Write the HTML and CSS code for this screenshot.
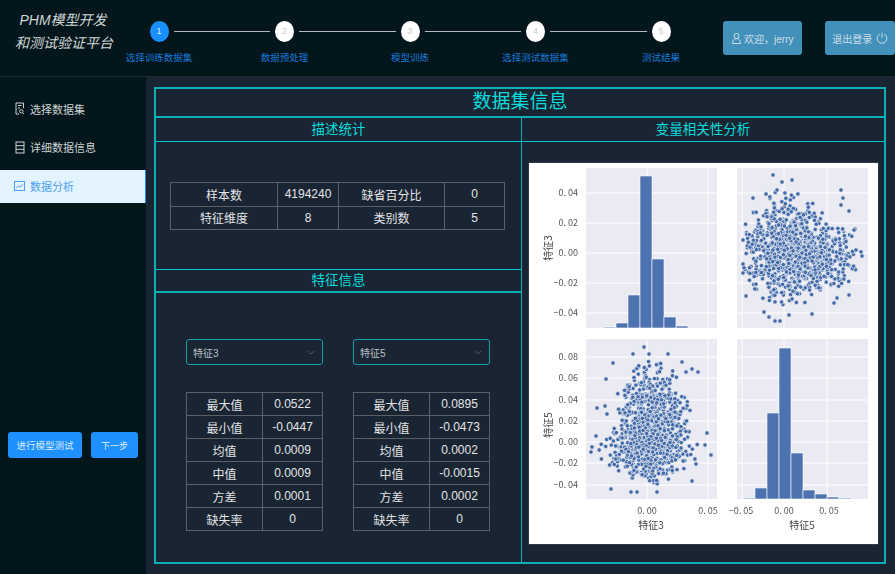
FILE: index.html

```html
<!DOCTYPE html>
<html>
<head>
	<meta charset="utf-8">
	<title>PHM模型开发和测试验证平台</title>
	<link rel="stylesheet" href="styles.css">
</head>
<body>
	<header class="topbar">
		<div class="brand">PHM模型开发<br>和测试验证平台</div>
		<div class="steps">
			<div class="step">
				<div class="step-head"><span class="step-line off"></span><span class="step-dot active">1</span><span class="step-line"></span></div>
				<div class="step-name">选择训练数据集</div>
			</div>
			<div class="step">
				<div class="step-head"><span class="step-line"></span><span class="step-dot">2</span><span class="step-line"></span></div>
				<div class="step-name">数据预处理</div>
			</div>
			<div class="step">
				<div class="step-head"><span class="step-line"></span><span class="step-dot">3</span><span class="step-line"></span></div>
				<div class="step-name">模型训练</div>
			</div>
			<div class="step">
				<div class="step-head"><span class="step-line"></span><span class="step-dot">4</span><span class="step-line"></span></div>
				<div class="step-name">选择测试数据集</div>
			</div>
			<div class="step">
				<div class="step-head"><span class="step-line"></span><span class="step-dot">5</span><span class="step-line off"></span></div>
				<div class="step-name">测试结果</div>
			</div>
		</div>
		<button class="top-btn welcome">
			<svg class="icon user" viewBox="0 0 9 11"><circle cx="4.500" cy="3" r="2.500"/><path d="M.5 10.500c0-3 1.500-5 4-5s4 2 4 5z"/></svg>
			欢迎，jerry
		</button>
		<button class="top-btn logout">
			退出登录
			<svg class="icon power" viewBox="0 0 12 12"><path d="M3.800 2.200a4.800 4.800 0 1 0 4.400 0"/><path d="M6 .8v5"/></svg>
		</button>
	</header>

	<div class="layout">
		<aside class="sidebar">
			<div class="menu-item">
				<svg class="icon" viewBox="0 0 10 13"><path d="M8.500 6V1H1v11h3"/><path d="M3 3.500h3.500M3 6h2"/><circle cx="6.300" cy="9.300" r="1.700"/><path d="M7.500 10.500l1.500 1.500"/></svg>
				选择数据集
			</div>
			<div class="menu-item">
				<svg class="icon" viewBox="0 0 10 13"><rect x="1" y="1" width="8" height="11"/><path d="M1 4.700h8M1 8.300h8"/></svg>
				详细数据信息
			</div>
			<div class="menu-item current">
				<svg class="icon chart-icon" viewBox="0 0 11 10"><rect x=".5" y=".5" width="10" height="9"/><path d="M2.200 7l2.300-2 1.500 1.200 3-3"/></svg>
				数据分析
			</div>
			<div class="side-actions">
				<button class="side-btn test">进行模型测试</button>
				<button class="side-btn next">下一步</button>
			</div>
		</aside>

		<main class="content">
			<div class="panel">
				<h1 class="panel-title">数据集信息</h1>
				<div class="panel-body">
					<div class="left-col">
						<h2 class="section-title">描述统计</h2>
						<div class="summary">
							<table class="info wide">
								<tr><td class="c1">样本数</td><td class="c2">4194240</td><td class="c3">缺省百分比</td><td>0</td></tr>
								<tr><td class="c1">特征维度</td><td class="c2">8</td><td class="c3">类别数</td><td>5</td></tr>
							</table>
						</div>
						<h2 class="section-title second">特征信息</h2>
						<div class="features">
							<div class="feature">
								<div class="select"><span>特征3</span><svg class="chevron" viewBox="0 0 10 6"><path d="M1 1l4 4 4-4"/></svg></div>
								<table class="info">
									<tr><td class="name">最大值</td><td>0.0522</td></tr>
									<tr><td class="name">最小值</td><td>-0.0447</td></tr>
									<tr><td class="name">均值</td><td>0.0009</td></tr>
									<tr><td class="name">中值</td><td>0.0009</td></tr>
									<tr><td class="name">方差</td><td>0.0001</td></tr>
									<tr><td class="name">缺失率</td><td>0</td></tr>
								</table>
							</div>
							<div class="feature">
								<div class="select"><span>特征5</span><svg class="chevron" viewBox="0 0 10 6"><path d="M1 1l4 4 4-4"/></svg></div>
								<table class="info">
									<tr><td class="name">最大值</td><td>0.0895</td></tr>
									<tr><td class="name">最小值</td><td>-0.0473</td></tr>
									<tr><td class="name">均值</td><td>0.0002</td></tr>
									<tr><td class="name">中值</td><td>-0.0015</td></tr>
									<tr><td class="name">方差</td><td>0.0002</td></tr>
									<tr><td class="name">缺失率</td><td>0</td></tr>
								</table>
							</div>
						</div>
					</div>
					<div class="right-col">
						<h2 class="section-title">变量相关性分析</h2>
						<div class="chart-wrap">
							<svg id="pairplot" class="pairplot" viewBox="529 163 349 381"></svg>
						</div>
					</div>
				</div>
			</div>
		</main>
	</div>
	<script src="chart.js"></script>
</body>
</html>
```

FILE: styles.css

```css
* {
  box-sizing: border-box;
}
html, body {
  margin: 0;
  height: 574px;
  overflow: hidden;
}
body {
  background-color: #1a2533;
  font-family: "Liberation Sans", "Noto Sans CJK SC", sans-serif;
}
h1, h2 {
  margin: 0;
  font-weight: normal;
  text-align: center;
  color: #0adcdc;
}
button {
  font-family: inherit;
  border: none;
  padding: 0;
  cursor: pointer;
}
.icon {
  fill: none;
  stroke: currentColor;
  stroke-width: 1;
  width: 10px;
  height: 13px;
  flex: none;
}
.icon.user {
  width: 9px;
  height: 11px;
}
.icon.power {
  width: 12px;
  height: 12px;
}
.icon.chart-icon {
  width: 11px;
  height: 10px;
  margin-left: -1px;
}

/* top bar */
.topbar {
  display: flex;
  align-items: flex-start;
  height: 77px;
  background-color: #02161c;
  border-bottom: 1px solid #1e2b37;
}
.brand {
  width: 96px;
  margin: 9px -14.750px 0 15px;
  font-size: 14px;
  line-height: 23px;
  font-style: italic;
  text-align: center;
  color: #d2d6d6;
  white-space: nowrap;
  flex: none;
}
.steps {
  display: flex;
  width: 627.500px;
  margin-top: 21px;
  flex: none;
}
.step {
  width: 125.500px;
}
.step-head {
  display: flex;
  align-items: center;
  gap: 5px;
}
.step-line {
  flex: 1;
  height: 1px;
  background-color: #b4b8b8;
}
.step-line.off {
  visibility: hidden;
}
.step-dot {
  width: 19px;
  height: 21px;
  border-radius: 50%;
  background-color: #fff;
  color: #c9c9c9;
  font-size: 9px;
  line-height: 21px;
  text-align: center;
  flex: none;
}
.step-dot.active {
  background-color: #1890ff;
  color: #d8ecff;
}
.step-name {
  margin-top: 9px;
  font-size: 9.500px;
  line-height: 14px;
  text-align: center;
  color: #1b78d6;
}
.top-btn {
  display: flex;
  align-items: center;
  justify-content: center;
  height: 34px;
  margin-top: 21px;
  background-color: #4191ba;
  color: #cfdde6;
  font-size: 10px;
  white-space: nowrap;
  border-radius: 3px;
  flex: none;
}
.welcome {
  width: 79px;
  gap: 3px;
  margin-left: -0.500px;
}
.logout {
  width: 70px;
  gap: 4px;
  margin-left: 23px;
}

/* page below the bar */
.layout {
  display: flex;
  height: 497px;
}
.sidebar {
  width: 146px;
  padding-top: 16px;
  background-color: #02161c;
  flex: none;
}
.menu-item {
  display: flex;
  align-items: center;
  gap: 5px;
  height: 33px;
  margin-bottom: 5.500px;
  padding: 0 0 2px 15px;
  font-size: 11px;
  color: #cdd2d3;
}
.menu-item.current {
  background-color: #e3f3ff;
  color: #4d9ff2;
  border-right: 1px solid #1890ff;
}
.side-actions {
  display: flex;
  gap: 9px;
  margin-top: 229px;
  padding-left: 8px;
}
.side-btn {
  height: 26px;
  background-color: #1e90ff;
  color: #dcecff;
  font-size: 9.500px;
  border-radius: 3px;
}
.side-btn.test {
  width: 74px;
}
.side-btn.next {
  width: 47px;
  font-size: 9px;
}

/* main panel */
.content {
  flex: 1;
  padding: 10px 9px 0 8px;
}
.panel {
  height: 477px;
  border: 2px solid #0ab0b5;
  background-color: #1a2533;
}
.panel-title {
  height: 29px;
  font-size: 19px;
  line-height: 25px;
  border-bottom: 2px solid #0ab0b5;
}
.panel-body {
  display: flex;
  height: 444px;
}
.left-col {
  width: 366px;
  border-right: 1px solid #0ab0b5;
  flex: none;
}
.right-col {
  flex: 1;
}
.section-title {
  height: 24px;
  font-size: 13.500px;
  line-height: 23px;
  border-bottom: 1px solid #0cc4c8;
}
.section-title.second {
  border-top: 1px solid #0cc4c8;
  border-bottom: 2px solid #0ab0b5;
  height: 24px;
  line-height: 22px;
}
.summary {
  height: 127px;
  padding: 40px 0 0 14px;
}
.info {
  border-collapse: collapse;
  table-layout: fixed;
  width: 137px;
  font-size: 12px;
  color: #e2e4e6;
}
.info td {
  height: 23px;
  padding: 0;
  border: 1px solid #5b6066;
  text-align: center;
}
.info.wide {
  width: 335px;
}
.info.wide td {
  height: 23.500px;
}
.info .c1 {
  width: 107px;
}
.info .c2 {
  width: 61px;
}
.info .c3 {
  width: 106px;
}
.info .name {
  width: 76px;
}
.features {
  display: flex;
  gap: 30px;
  padding: 46px 0 0 30px;
}
.select {
  display: flex;
  align-items: center;
  justify-content: space-between;
  width: 137px;
  height: 26px;
  margin-bottom: 27px;
  padding: 0 6px;
  border: 1px solid #0f9ea5;
  border-radius: 3px;
  font-size: 10px;
  color: #b9c1c5;
}
.chevron {
  width: 8px;
  height: 5px;
  margin-right: 1px;
  fill: none;
  stroke: #5e6a72;
  stroke-width: 1;
}

/* seaborn pair plot */
.chart-wrap {
  padding: 21px 0 0 7px;
}
.pairplot {
  display: block;
  width: 349px;
  height: 381px;
  background-color: #fff;
  box-shadow: 0 0 1px #9aa3aa;
  filter: blur(0.25px);
}
.plot-bg {
  fill: #eaeaf2;
}
.grid-line {
  stroke: #fff;
  stroke-width: 1;
}
.bar {
  fill: #4c72b0;
  stroke: #fff;
  stroke-width: 0.6;
}
.dot {
  fill: #4269a8;
  stroke: #eef0f6;
  stroke-width: 0.7;
}
.tick {
  font-family: "Noto Sans CJK SC", sans-serif;
  font-size: 9px;
  fill: #555;
}
.axis-name {
  font-family: "Noto Sans CJK SC", sans-serif;
  font-size: 10px;
  fill: #444;
}
```

FILE: chart.js

```js
// draws the pair plot, coordinates are the page pixels (see the viewBox)
const svg = document.getElementById("pairplot");
const colX = [[586, 131], [737, 131]];
const rowY = [[168, 160], [339, 160]];
const gridA = [647, 708];
const gridB = [742, 784, 827];
const rowTicks = [
  [[193, "0. 04"], [223, "0. 02"], [253, "0. 00"], [283, "−0. 02"], [313, "−0. 04"]],
  [[357, "0. 08"], [378, "0. 06"], [400, "0. 04"], [421, "0. 02"], [442, "0. 00"], [463, "−0. 02"], [485, "−0. 04"]]
];

let seed = 20417;
function rnd() {
  seed = (seed + 0x6D2B79F5) | 0;
  let t = Math.imul(seed ^ (seed >>> 15), 1 | seed);
  t = (t + Math.imul(t ^ (t >>> 7), 61 | t)) ^ t;
  return ((t ^ (t >>> 14)) >>> 0) / 4294967296;
}
function gauss() {
  return Math.sqrt(-2 * Math.log(1 - rnd())) * Math.cos(2 * Math.PI * rnd());
}

let out = "";
function addPlot(c, r) {
  const [x, w] = colX[c];
  const [y, h] = rowY[r];
  out += `<rect class="plot-bg" x="${x}" y="${y}" width="${w}" height="${h}"/>`;
  (c == 0 ? gridA : gridB).forEach(g => {
    out += `<line class="grid-line" x1="${g}" x2="${g}" y1="${y}" y2="${y + h}"/>`;
  });
  rowTicks[r].forEach(t => {
    out += `<line class="grid-line" x1="${x}" x2="${x + w}" y1="${t[0]}" y2="${t[0]}"/>`;
  });
}
function addBars(bottom, bars) {
  bars.forEach(b => {
    out += `<rect class="bar" x="${b[0]}" y="${b[1]}" width="12" height="${bottom - b[1]}"/>`;
  });
}
function dot(x, y) {
  out += `<circle class="dot" cx="${x.toFixed(1)}" cy="${y.toFixed(1)}" r="2.2"/>`;
}
// one cloud of points, cut off at lim standard deviations
function addCloud(n, cx, cy, sx, sy, lim) {
  for (let i = 0; i < n; i++) {
    const a = gauss();
    const b = gauss();
    if (a * a + b * b <= lim * lim) {
      dot(cx + a * sx, cy + b * sy);
    }
  }
}

addPlot(0, 0);
addPlot(1, 0);
addPlot(0, 1);
addPlot(1, 1);

addBars(328, [[604, 327], [616, 323], [628, 295], [640, 176], [652, 259], [664, 317], [676, 326]]);
addBars(499, [[743, 498], [755, 488], [767, 413], [779, 348], [791, 453], [803, 490], [815, 494], [827, 497], [839, 498]]);

addCloud(720, 786, 250, 21, 27, 2.2);
addCloud(300, 822, 258, 18, 16, 2.2);
[
  [773, 175], [782, 182], [792, 180], [777, 190], [766, 194], [753, 198], [841, 190], [843, 198], [841, 205],
  [849, 211], [743, 240], [743, 264], [743, 273], [746, 296], [862, 256], [856, 250], [855, 229], [854, 230],
  [849, 295], [834, 303], [837, 298], [812, 314], [780, 321], [775, 321], [764, 312], [769, 317], [789, 315]
].forEach(p => dot(p[0], p[1]));

addCloud(780, 652, 425, 18, 29, 2.2);
addCloud(260, 648, 452, 26, 12, 2);
[
  [644, 347], [649, 354], [613, 363], [682, 362], [668, 354], [633, 354], [692, 369], [698, 372], [686, 372],
  [606, 379], [597, 408], [605, 406], [607, 414], [592, 447], [591, 452], [596, 436], [707, 433], [705, 445],
  [711, 455], [696, 464], [692, 481], [611, 489], [631, 492], [637, 492], [657, 492]
].forEach(p => dot(p[0], p[1]));

rowTicks.forEach(ticks => {
  ticks.forEach(t => {
    out += `<text class="tick" x="578" y="${t[0] + 3}" text-anchor="end">${t[1]}</text>`;
  });
});
[[647, "0. 00"], [708, "0. 05"], [741, "−0. 05"], [784, "0. 00"], [829, "0. 05"]].forEach(t => {
  out += `<text class="tick" x="${t[0]}" y="514" text-anchor="middle">${t[1]}</text>`;
});
out += `<text class="axis-name" x="651" y="529" text-anchor="middle">特征3</text>`;
out += `<text class="axis-name" x="802" y="529" text-anchor="middle">特征5</text>`;
out += `<text class="axis-name" transform="translate(552 248) rotate(-90)" text-anchor="middle">特征3</text>`;
out += `<text class="axis-name" transform="translate(552 425) rotate(-90)" text-anchor="middle">特征5</text>`;

svg.innerHTML = out;
```
